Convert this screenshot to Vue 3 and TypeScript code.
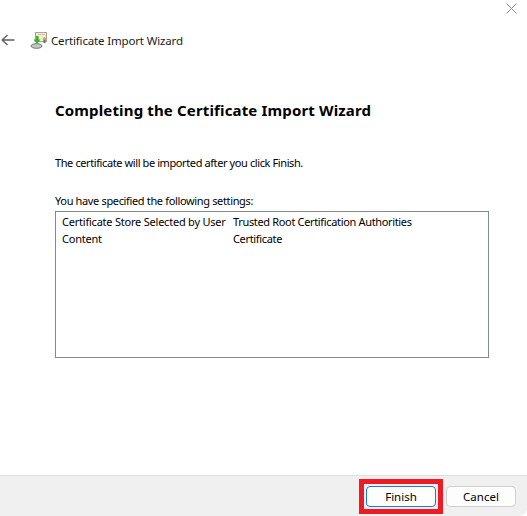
<script setup lang="ts">
const rows: [string, string][] = [
  ['Certificate Store Selected by User', 'Trusted Root Certification Authorities'],
  ['Content', 'Certificate'],
]
</script>

<template>
  <div class="window">
    <div class="titlebar">
      <svg class="close" width="11" height="11" viewBox="0 0 11 11"><path d="M.5.500l10 10M10.500.500l-10 10" stroke="#8a8a8a" stroke-width="1" fill="none"/></svg>
    </div>
    <div class="header">
      <svg class="back" width="14" height="12" viewBox="0 0 14 12"><path d="M6.500 1L1.200 6l5.300 5M1.200 6H13.500" stroke="#5f5f5f" stroke-width="1.300" fill="none"/></svg>
      <svg class="cert" width="18" height="18" viewBox="0 0 18 18">
        <rect x="5.500" y="1.500" width="11" height="9" fill="#f3ecd8" stroke="#a9a58f" stroke-width="1"/>
        <rect x="8" y="3" width="7" height="1" fill="#c9c3ad"/>
        <circle cx="14.500" cy="8" r="1.800" fill="#e8a020"/>
        <rect x="13.500" y="9" width="2" height="3" fill="#3a70b8"/>
        <ellipse cx="6.500" cy="15" rx="5.500" ry="2.300" fill="#c4c8c4" stroke="#6d726d" stroke-width="1"/>
        <path d="M6 5h2.600v3.500h1.900L7 13 3.500 8.500H6z" fill="#3fae2a"/>
      </svg>
      <span class="wizard">Certificate Import Wizard</span>
    </div>
    <main class="content">
      <h1>Completing the Certificate Import Wizard</h1>
      <p class="intro">The certificate will be imported after you click Finish.</p>
      <p class="label">You have specified the following settings:</p>
      <div class="list">
        <div v-for="row in rows" :key="row[0]" class="row">
          <span class="col-a">{{ row[0] }}</span>
          <span class="col-b">{{ row[1] }}</span>
        </div>
      </div>
    </main>
    <footer class="footer">
      <div class="finish-wrap">
        <button class="btn primary">Finish</button>
      </div>
      <button class="btn">Cancel</button>
    </footer>
  </div>
</template>

<style>
html, body { margin: 0; background: #fff; }
</style>

<style scoped>
.window {
  width: 527px;
  height: 516px;
  display: flex;
  flex-direction: column;
  background: #fff;
  color: #000;
  font-family: "Noto Sans", "Open Sans", sans-serif;
  font-size: 11px;
  overflow: hidden;
}
.titlebar {
  height: 26px;
  display: flex;
  justify-content: flex-end;
  align-items: flex-start;
  padding: 3px 10px 0 0;
  box-sizing: border-box;
}
.header {
  height: 28px;
  display: flex;
  align-items: center;
  padding-left: 1px;
}
.cert { margin-left: 15px; }
.wizard { margin-left: 3px; font-size: 11.5px; letter-spacing: -0.16px; color: #1a1a1a; }
.content {
  flex: 1;
  padding: 0 38px 0 55px;
}
h1 {
  margin: 0;
  padding-top: 46px;
  font-size: 15px;
  line-height: 20px;
  font-weight: 700;
  letter-spacing: 0.15px;
}
.intro { margin: 35px 0 0; line-height: 16px; letter-spacing: -0.4px; }
.label { margin: 22px 0 0; line-height: 16px; letter-spacing: -0.35px; }
.list {
  height: 147px;
  margin-top: 2px;
  box-sizing: border-box;
  border: 1px solid #828790;
  padding: 1px 6px;
}
.row { display: flex; height: 17px; line-height: 17px; white-space: nowrap; }
.col-a { width: 171px; flex: none; letter-spacing: -0.22px; }
.col-b { letter-spacing: -0.34px; }
.footer {
  height: 41px;
  box-sizing: border-box;
  border-top: 1px solid #dfdfdf;
  background: #f0f0f0;
  border-bottom-right-radius: 8px;
  display: flex;
  align-items: center;
  justify-content: flex-end;
  gap: 3px;
  padding-right: 11px;
}
.finish-wrap {
  border: 5px solid #ed1c24;
  padding: 2px;
  display: flex;
}
.btn {
  width: 70px;
  height: 21px;
  padding: 0;
  box-sizing: border-box;
  background: #fdfdfd;
  border: 1px solid #d0d0d0;
  border-radius: 4px;
  font: inherit;
  font-size: 11.5px;
  color: #000;
}
.primary { border: 1px solid #1f78c8; }
</style>
